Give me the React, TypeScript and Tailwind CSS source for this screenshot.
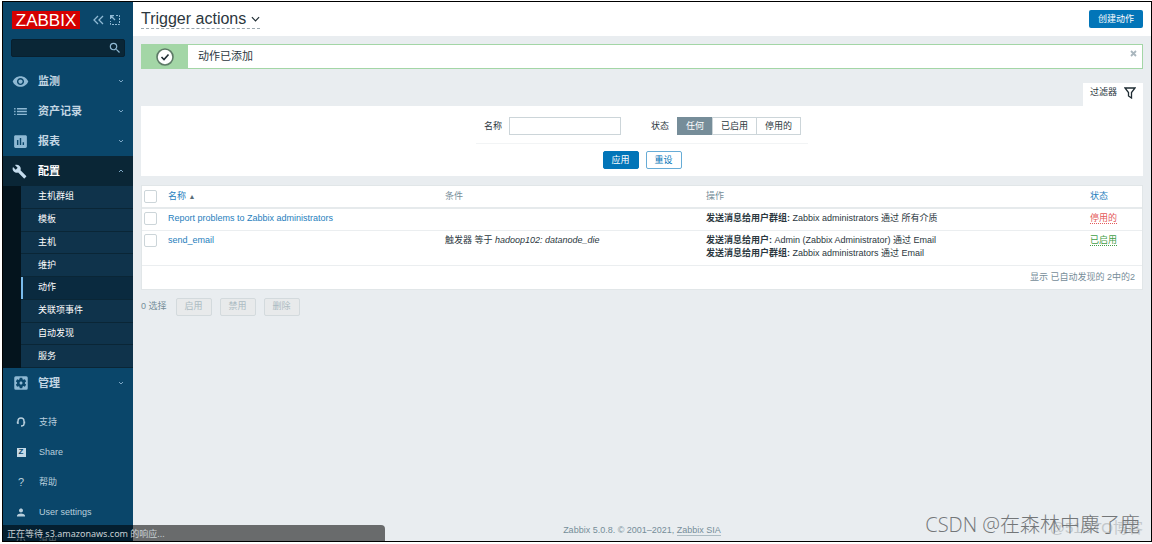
import type { ReactNode } from 'react'
import { MdBuild, MdInsertChart, MdList, MdPerson, MdPowerSettingsNew, MdRemoveRedEye, MdSearch, MdSettingsApplications } from 'react-icons/md'

const submenu = ['主机群组', '模板', '主机', '维护', '动作', '关联项事件', '自动发现', '服务']

function Chevron({ up = false }: { up?: boolean }) {
  return (
    <svg viewBox="0 0 6 6" className="size-[6px] fill-none stroke-[#7ba6c4]" aria-hidden="true">
      <path d={up ? 'M1 4l2-2 2 2' : 'M1 2l2 2 2-2'} />
    </svg>
  )
}

function MenuItem({ icon, label, open = false }: { icon: ReactNode; label: string; open?: boolean }) {
  return (
    <a
      href="#"
      aria-expanded={open}
      className={`flex h-[30px] items-center pr-[9px] pl-[9px] text-[11px] font-bold ${open ? 'bg-[#0a2636] text-white' : 'text-[#c3d6e3]'}`}
    >
      <span className={`flex w-[26px] ${open ? 'text-[#c5dced]' : 'text-[#8fb9d4]'}`}>{icon}</span>
      <span className="flex-1">{label}</span>
      <Chevron up={open} />
    </a>
  )
}

function UserItem({ icon, label }: { icon: ReactNode; label: string }) {
  return (
    <a href="#" className="flex h-[30px] shrink-0 items-center pl-[12px] text-[#b9cfdd]">
      <span className="flex w-[12px] justify-center">{icon}</span>
      <span className="pl-[12px]">{label}</span>
    </a>
  )
}

function Sidebar() {
  return (
    <aside className="flex w-[130px] shrink-0 flex-col overflow-hidden bg-[#0a466a]">
      <div className="flex h-[36px] shrink-0 items-center pl-[9px]">
        <a href="#" className="flex h-[18px] w-[68px] items-center justify-center bg-[#d40000] text-[17px] text-white">
          ZABBIX
        </a>
        <button type="button" aria-label="Collapse sidebar" className="ml-[12px]">
          <svg viewBox="0 0 12 10" className="h-[10px] w-[12px] fill-none stroke-[#8fb9d4]">
            <path d="M6 1L2 5l4 4M11 1L7 5l4 4" strokeWidth="1.300" />
          </svg>
        </button>
        <button type="button" aria-label="Hide sidebar" className="ml-[6px]">
          <svg viewBox="0 0 10 10" className="size-[10px] fill-none stroke-[#8fb9d4]">
            <path d="M6 .5h3.500v9H.5V6" strokeDasharray="2 1" />
            <path d="M.5 4V.5H4M1 1l4 4" strokeWidth="1.300" />
          </svg>
        </button>
      </div>
      <form className="mx-[8px] mt-[1px] flex h-[18px] shrink-0 items-center rounded-xs border border-[#08202f] bg-[#0a2636] pr-[2px]">
        <input aria-label="Search" className="h-full min-w-0 flex-1 bg-transparent px-1 text-white outline-none" />
        <button type="button" aria-label="Search" className="text-[#8fb9d4]">
          <MdSearch size={14} />
        </button>
      </form>
      <nav className="mt-[9px] shrink-0">
        <MenuItem icon={<MdRemoveRedEye size={17} />} label="监测" />
        <MenuItem icon={<MdList size={17} />} label="资产记录" />
        <MenuItem icon={<MdInsertChart size={17} />} label="报表" />
        <MenuItem icon={<MdBuild size={15} />} label="配置" open />
        <ul className="flex h-[182px] flex-col border-l-[18px] border-[#04141d]">
          {submenu.map((item) => (
            <li key={item} className="flex flex-1 border-b border-[#0a2636]">
              <a
                href="#"
                className={`flex flex-1 items-center text-white ${item === '动作' ? 'border-l-2 border-[#79bbec] bg-[#0a2a3f] pl-[15px]' : 'bg-[#0f334b] pl-[17px]'}`}
              >
                {item}
              </a>
            </li>
          ))}
        </ul>
        <MenuItem icon={<MdSettingsApplications size={18} />} label="管理" />
      </nav>
      <nav className="mt-[9px] flex flex-col">
        <UserItem
          label="支持"
          icon={
            <svg viewBox="0 0 10 10" className="size-[10px] fill-none stroke-current" strokeWidth="1.400">
              <path d="M2 7V4a3 3 0 0 1 6 0v3c0 1.500-1 2-3 2M1.500 4.500v2M8.500 4.500v2" />
            </svg>
          }
        />
        <UserItem
          label="Share"
          icon={<span className="flex size-[9px] items-center justify-center bg-[#c5d9e6] text-[8px] leading-none font-bold text-[#0a466a]">Z</span>}
        />
        <UserItem label="帮助" icon={<span className="text-[11px]">?</span>} />
        <UserItem label="User settings" icon={<MdPerson size={13} />} />
        <UserItem label="退出" icon={<MdPowerSettingsNew size={12} />} />
      </nav>
    </aside>
  )
}

function Filter() {
  return (
    <form className="mx-[8px] mt-[14px]">
      <div className="flex justify-end">
        <button type="button" className="flex h-[23px] w-[60px] items-center justify-between bg-white px-[7px] pb-[4px]">
          过滤器
          <svg viewBox="0 0 12 12" className="size-[12px] fill-none stroke-[#1f2c33]" strokeWidth="1.300">
            <path d="M1 1h10L7.500 5.500V11l-3-2V5.500z" />
          </svg>
        </button>
      </div>
      <div className="flex h-[70px] flex-col items-center bg-white pt-[11px]">
        <div className="flex h-[27px] w-[332px] items-start border-b border-[#f2f4f5] pl-[8px]">
          <label htmlFor="name" className="w-[25px] leading-[18px]">名称</label>
          <input id="name" className="h-[18px] w-[112px] border border-[#ccd5d9] px-1 outline-none" />
          <fieldset className="ml-[30px] flex">
            <legend className="float-left w-[27px] leading-[18px]">状态</legend>
            {['任何', '已启用', '停用的'].map((state, i) => (
              <label
                key={state}
                className="-ml-px flex h-[18px] cursor-pointer items-center border border-[#ccd5d9] px-[8px] has-checked:border-[#768d99] has-checked:bg-[#768d99] has-checked:text-white"
              >
                <input type="radio" name="status" defaultChecked={i === 0} className="sr-only" />
                {state}
              </label>
            ))}
          </fieldset>
        </div>
        <div className="mt-[7px] flex gap-[7px]">
          <button type="button" className="h-[18px] w-[36px] rounded-xs border border-[#0275b8] bg-[#0275b8] text-white">应用</button>
          <button type="button" className="h-[18px] w-[36px] rounded-xs border border-[#67acd6] text-[#0275b8]">重设</button>
        </div>
      </div>
    </form>
  )
}

function Check({ label }: { label: string }) {
  return <input type="checkbox" aria-label={label} className="block size-[13px] appearance-none rounded-xs border border-[#ccd5d9] bg-white checked:bg-[#0275b8]" />
}

function ActionsTable() {
  return (
    <div className="mx-[8px] mt-[9px] border border-[#e1e6e8] bg-white">
      <table className="w-full table-fixed text-left">
        <colgroup>
          <col className="w-[26px]" />
          <col className="w-[277px]" />
          <col className="w-[261px]" />
          <col />
          <col className="w-[52px]" />
        </colgroup>
        <thead className="text-[#768d99]">
          <tr className="h-[22px] border-b-2 border-[#e6eaec]">
            <th className="pl-[2px]"><Check label="Select all" /></th>
            <th className="font-normal">
              <a href="#" className="text-[#1f80bd]">名称 <span className="text-[7px] text-[#5a6d78]">▲</span></a>
            </th>
            <th className="font-normal">条件</th>
            <th className="font-normal">操作</th>
            <th className="font-normal"><a href="#" className="text-[#1f80bd]">状态</a></th>
          </tr>
        </thead>
        <tbody className="align-top leading-[13px]">
          <tr className="h-[22px] border-b border-[#ebeef0]">
            <td className="pt-[3px] pl-[2px]"><Check label="Report problems to Zabbix administrators" /></td>
            <td className="pt-[3px]"><a href="#" className="text-[#1f80bd]">Report problems to Zabbix administrators</a></td>
            <td />
            <td className="pt-[3px]"><b>发送消息给用户群组:</b> Zabbix administrators 通过 所有介质</td>
            <td className="pt-[3px]"><a href="#" className="border-b border-dotted border-[#e45959] text-[#e45959]">停用的</a></td>
          </tr>
          <tr className="h-[35px] border-b border-[#ebeef0]">
            <td className="pt-[3px] pl-[2px]"><Check label="send_email" /></td>
            <td className="pt-[3px]"><a href="#" className="text-[#1f80bd]">send_email</a></td>
            <td className="pt-[3px]">触发器 等于 <em>hadoop102: datanode_die</em></td>
            <td className="pt-[3px]">
              <b>发送消息给用户:</b> Admin (Zabbix Administrator) 通过 Email
              <br />
              <b>发送消息给用户群组:</b> Zabbix administrators 通过 Email
            </td>
            <td className="pt-[3px]"><a href="#" className="border-b border-dotted border-[#429e47] text-[#429e47]">已启用</a></td>
          </tr>
        </tbody>
      </table>
      <p className="flex h-[23px] items-center justify-end pr-[7px] text-[#768d99]">显示 已自动发现的 2中的2</p>
    </div>
  )
}

export default function App() {
  return (
    <div className='relative flex h-screen flex-col bg-white pt-px pb-[2px] pl-[2px] font-["Liberation_Sans","Noto_Sans_CJK_SC",sans-serif] text-[9px] leading-[13px] text-[#2b373e]'>
      <div className="flex min-h-0 flex-1 border border-black">
        <Sidebar />
        <main className="flex min-w-0 flex-1 flex-col bg-[#e9edf0]">
          <header className="flex h-[34px] items-center justify-between bg-white px-[8px]">
            <h1>
              <button type="button" className="flex items-center gap-[5px] border-b border-dashed border-[#9aa7ae] text-[16px] leading-[18px]">
                Trigger actions
                <svg viewBox="0 0 10 6" className="h-[6px] w-[9px] fill-none stroke-[#1f2c33]" strokeWidth="1.300">
                  <path d="M1 1l4 4 4-4" />
                </svg>
              </button>
            </h1>
            <button type="button" className="h-[18px] w-[54px] rounded-xs bg-[#0275b8] text-white">创建动作</button>
          </header>
          <output className="mx-[8px] mt-[8px] flex h-[25px] border border-[#a3d6a6] bg-white text-[11px]">
            <span className="flex w-[46px] items-center justify-center bg-[#a3d6a6]">
              <svg viewBox="0 0 18 18" className="size-[18px]">
                <circle cx="9" cy="9" r="8" fill="#fff" stroke="#5d7a66" strokeWidth="1.600" />
                <path d="M5.500 9l2.500 2.500L12.500 6.500" fill="none" stroke="#1f2c33" strokeWidth="1.600" />
              </svg>
            </span>
            <span className="flex-1 self-center pl-[10px]">动作已添加</span>
            <button type="button" aria-label="Close" className="mt-[5px] mr-[5px] size-[7px]">
              <svg viewBox="0 0 7 7" className="size-[7px] stroke-[#a9b6bd]" strokeWidth="1.800">
                <path d="M1 1l5 5M6 1L1 6" />
              </svg>
            </button>
          </output>
          <Filter />
          <ActionsTable />
          <div className="mx-[8px] mt-[8px] flex items-center gap-[8px]">
            <span className="mr-[1px] text-[#768d99]">0 选择</span>
            {['启用', '禁用', '删除'].map((label) => (
              <button key={label} type="button" disabled className="h-[18px] w-[36px] rounded-xs border border-[#d3dadd] bg-[#e8eaeb] text-[#acbbc2]">
                {label}
              </button>
            ))}
          </div>
          <footer className="mt-auto pb-[4px] text-center text-[#768d99]">
            Zabbix 5.0.8. © 2001–2021, <a href="#" className="border-b border-[#acbbc2]">Zabbix SIA</a>
          </footer>
        </main>
      </div>
      <div className='absolute bottom-[2px] left-[3px] flex h-[17px] w-[382px] items-center rounded-tr-sm bg-black/55 pl-[4px] font-["Noto_Sans","Noto_Sans_CJK_SC",sans-serif] text-[#c8d0d4]'>
        正在等待 s3.amazonaws.com 的响应...
      </div>
      <div className='absolute right-[9px] bottom-[10px] font-["Liberation_Sans","Noto_Sans_CJK_SC",sans-serif] text-[15px] text-[#c3c8cb]'>@51CTO博客</div>
      <div className='absolute right-[12px] bottom-[7px] font-["Open_Sans","Noto_Sans_CJK_SC",sans-serif] text-[20px] leading-[24px] font-light text-[#737678]'>CSDN @在森林中麋了鹿</div>
    </div>
  )
}
